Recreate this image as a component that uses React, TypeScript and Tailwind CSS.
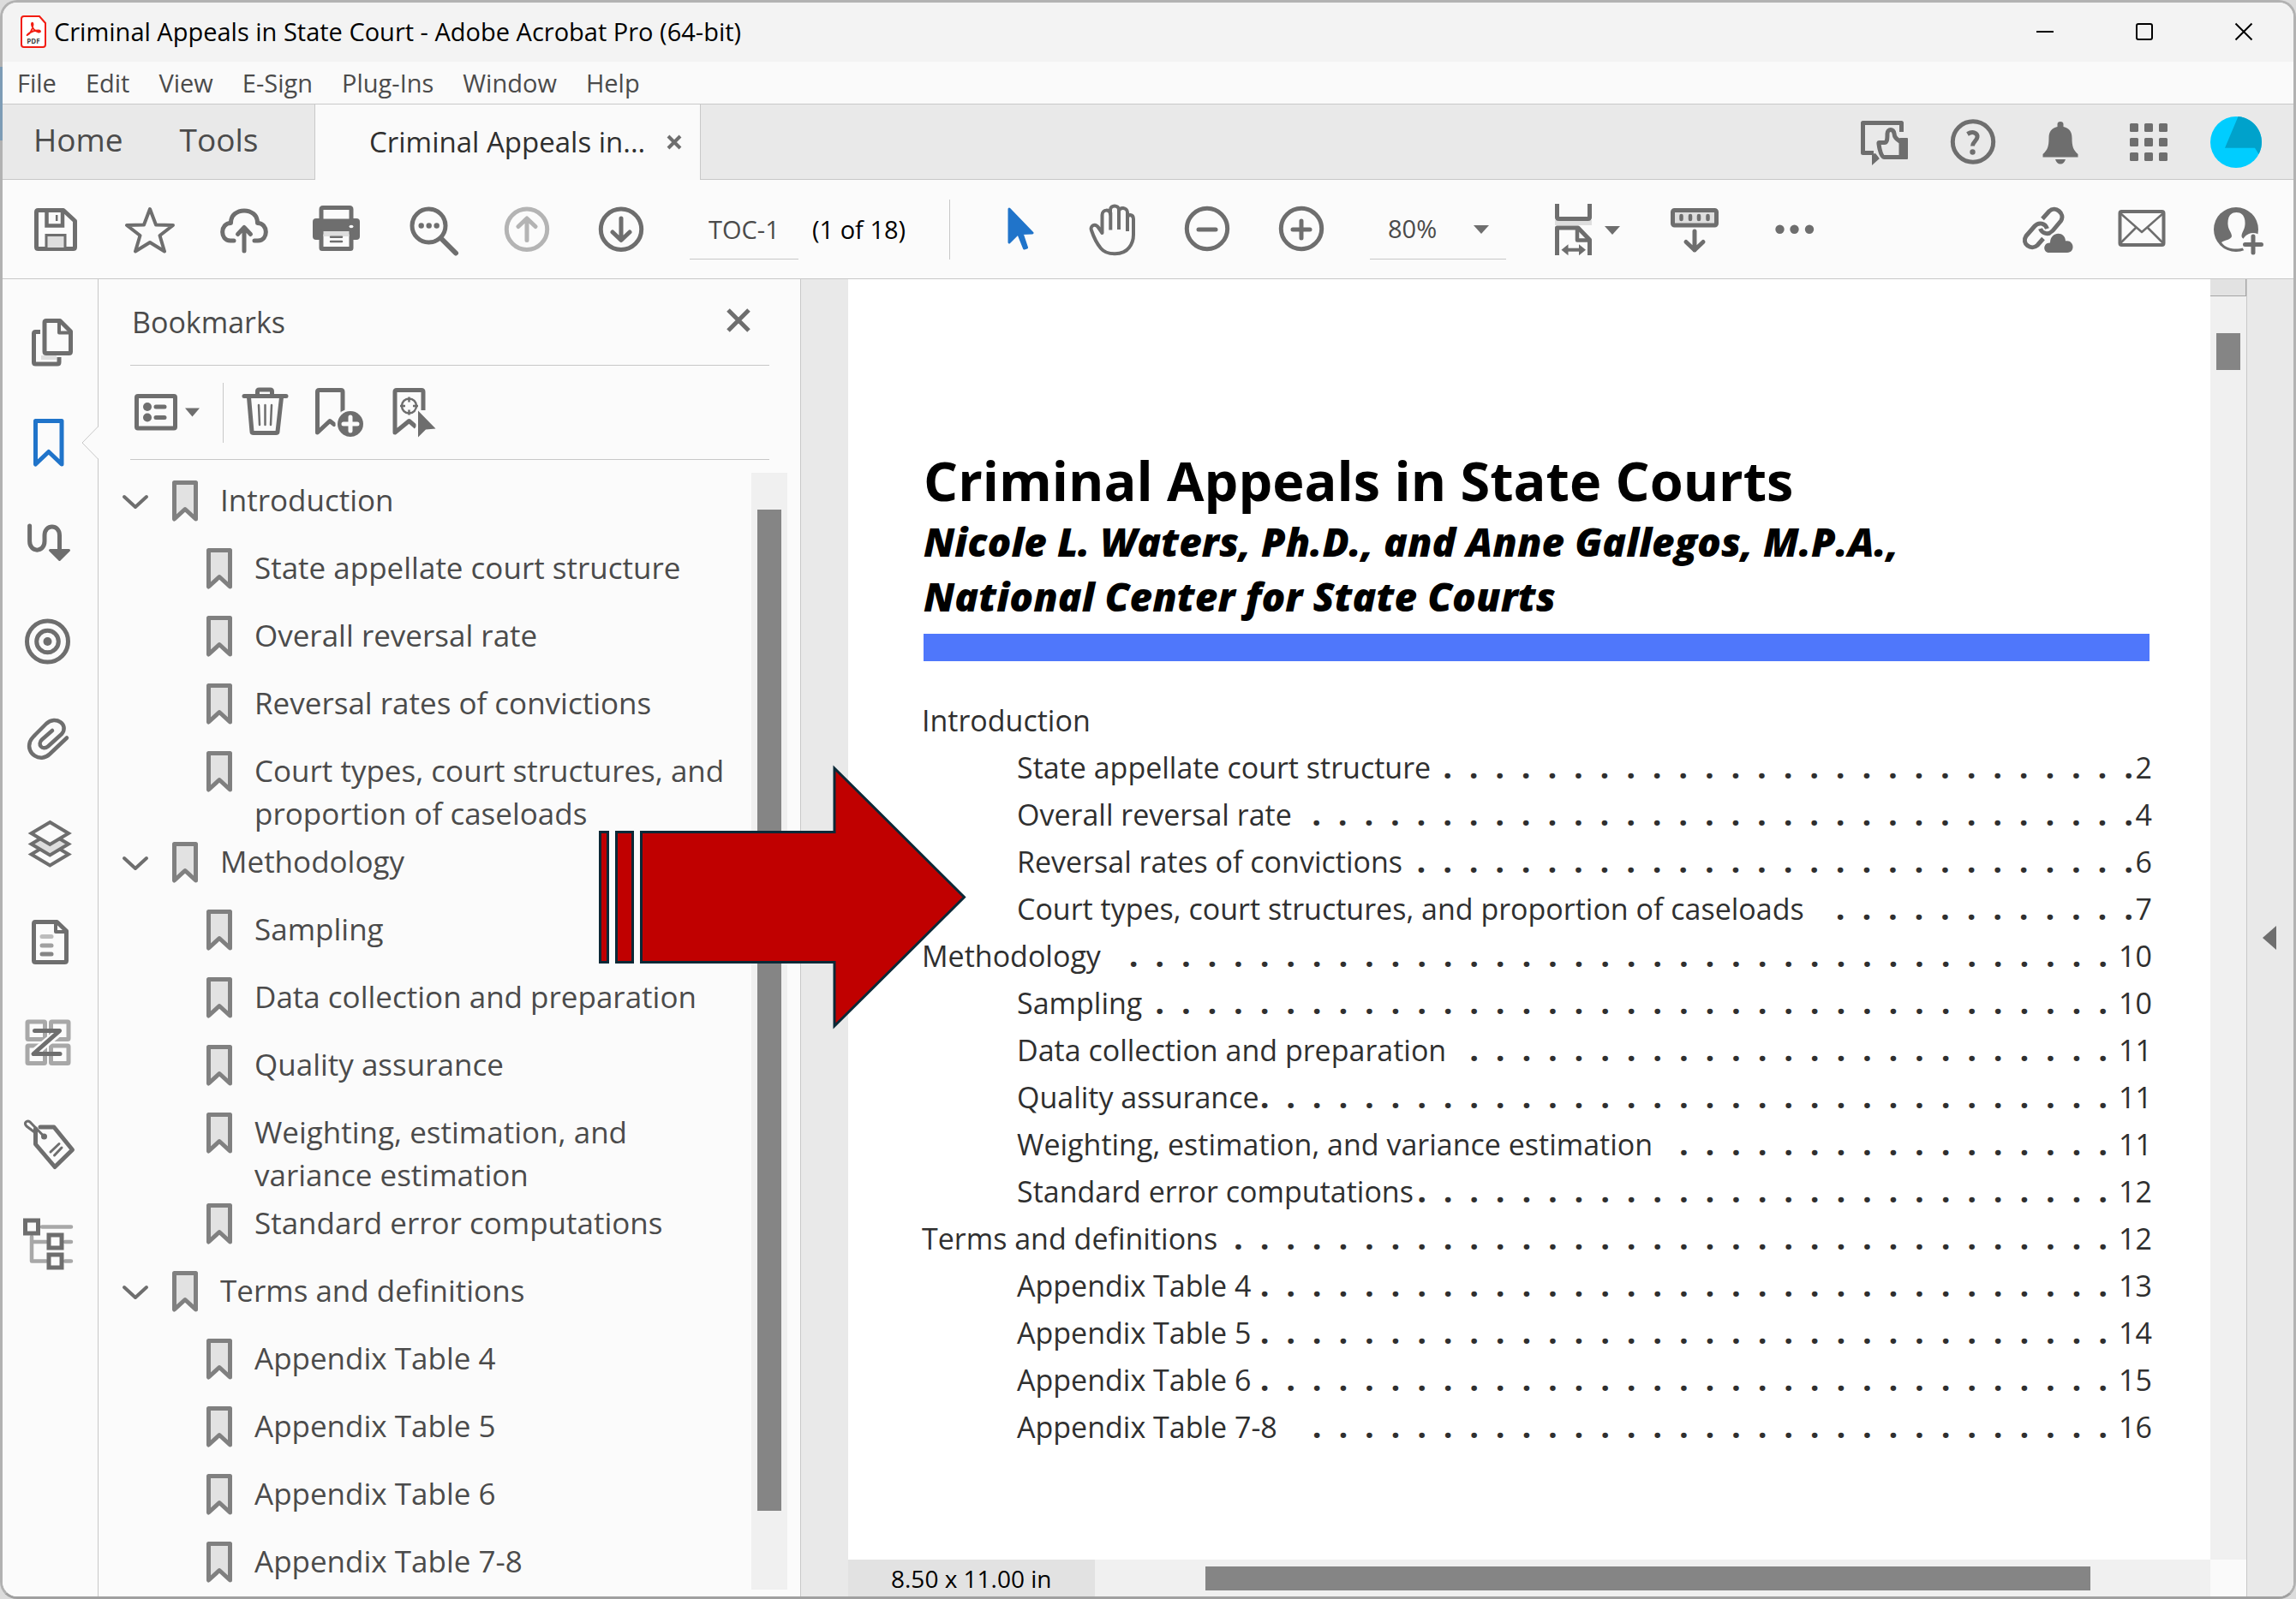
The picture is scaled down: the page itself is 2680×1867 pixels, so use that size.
import React from "react";

type IconProps = {
  w?: number;
  h?: number;
  stroke?: string;
  sw?: number;
  className?: string;
  children: React.ReactNode;
};

const GRAY = "#6e6e6e";
const LIGHT = "#dedede";

function Icon({ w = 60, h = 60, stroke = GRAY, sw = 5, className = "", children }: IconProps) {
  return (
    <svg
      width={w}
      height={h}
      viewBox={`0 0 ${w} ${h}`}
      fill="none"
      stroke={stroke}
      strokeWidth={sw}
      strokeLinecap="round"
      strokeLinejoin="round"
      aria-hidden="true"
      className={`shrink-0 overflow-visible ${className}`}
    >
      {children}
    </svg>
  );
}

function IconButton({ label, children, disabled }: { label: string; children: React.ReactNode; disabled?: boolean }) {
  return (
    <button type="button" aria-label={label} disabled={disabled} className="flex shrink-0 items-center">
      {children}
    </button>
  );
}

/* ---------- title bar, menu, tabs ---------- */

function AppLogo() {
  return (
    <svg width="30" height="38" viewBox="0 0 30 38" fill="none" aria-hidden="true" className="shrink-0">
      <path d="M4 1h18l7 8v25a3 3 0 0 1-3 3H4a3 3 0 0 1-3-3V4a3 3 0 0 1 3-3Z" fill="#fff" stroke="#f21d12" strokeWidth="2" />
      <path
        d="M8 23c3-1 6-7 6.500-12 .3-3-2-3-1.500 0 .6 4 4 8 8 8.500 3 .3 2.500-2 0-2-4 0-9 1.500-12 4-1.500 1.300-1.800 2-1 1.500Z"
        stroke="#f21d12"
        strokeWidth="1.800"
      />
      <text x="15" y="33" textAnchor="middle" fontSize="8" fontWeight="700" fill="#444" fontFamily="Open Sans, sans-serif">
        PDF
      </text>
    </svg>
  );
}

function TitleBar() {
  return (
    <header className="flex h-[69px] shrink-0 items-center bg-[#f3f3f3] pb-px pl-[21px]">
      <AppLogo />
      <h1 className="pl-[9px] text-[29px] whitespace-nowrap text-black">Criminal Appeals in State Court - Adobe Acrobat Pro (64-bit)</h1>
      <div className="ml-auto flex h-full">
        <button type="button" aria-label="Minimize" className="flex w-[116px] items-center justify-center">
          <Icon w={20} h={20} stroke="#000" sw={2}>
            <path d="M0 10h20" strokeLinecap="butt" />
          </Icon>
        </button>
        <button type="button" aria-label="Maximize" className="flex w-[116px] items-center justify-center">
          <Icon w={20} h={20} stroke="#000" sw={2}>
            <rect x="1" y="1" width="18" height="18" rx="2" />
          </Icon>
        </button>
        <button type="button" aria-label="Close" className="flex w-[116px] items-center justify-center">
          <Icon w={20} h={20} stroke="#000" sw={2}>
            <path d="M0.500 0.500 19.500 19.500M19.500 0.500 0.500 19.500" strokeLinecap="butt" />
          </Icon>
        </button>
      </div>
    </header>
  );
}

const MENUS = ["File", "Edit", "View", "E-Sign", "Plug-Ins", "Window", "Help"];

function MenuBar() {
  return (
    <nav aria-label="Menu" className="flex h-[50px] shrink-0 items-center gap-[34px] border-b border-[#c8c8c8] bg-[#fafafa] pl-[17px] text-[29px] text-[#4b4b4b]">
      {MENUS.map((m) => (
        <button type="button" key={m}>
          {m}
        </button>
      ))}
    </nav>
  );
}

function TabBar() {
  return (
    <div className="flex h-[88px] shrink-0 bg-[#e9e9e9]">
      <div className="flex w-[365px] items-center gap-[66px] border-r border-b border-[#c8c8c8] pb-1.5 pl-9 text-[37px] text-[#4b4b4b]">
        <button type="button">Home</button>
        <button type="button">Tools</button>
      </div>
      <div className="flex w-[449px] items-center bg-[#fafafa] pl-[63px] text-[33px] text-[#2f2f2f]">
        <span className="whitespace-nowrap">Criminal Appeals in...</span>
        <button type="button" aria-label="Close tab" className="mr-[21px] ml-auto">
          <Icon w={18} h={18} sw={4}>
            <path d="M2 2 16 16M16 2 2 16" strokeLinecap="butt" />
          </Icon>
        </button>
      </div>
      <div className="flex flex-1 items-center justify-end gap-[42px] border-b border-l border-[#c8c8c8] pr-[37px]">
        <IconButton label="Feedback">
          <Icon>
            <path d="M47.500 18V7.500h-45v35H15" strokeLinecap="butt" />
            <path d="M13 44v13l9-8-5-6Z" fill={GRAY} stroke="none" />
            <path d="M21 30.500h6.500c3 0 3.500-3 3.500-10.500C31 14 38.500 14 39 20c.3 5 3 6.500 8 10v17.500H27c-4 0-6.500-17-6-17Z" fill="#e9e9e9" stroke="#e9e9e9" strokeWidth="9" />
            <path d="M21 30.500h6.500c3 0 3.500-3 3.500-10.500C31 14 38.500 14 39 20c.3 5 3 6.500 8 10v17.500H27c-4 0-6.500-17-6-17Z" fill="#e9e9e9" />
            <rect x="45" y="25" width="10" height="25" rx="1" fill={GRAY} stroke="none" />
          </Icon>
        </IconButton>
        <IconButton label="Help">
          <Icon>
            <circle cx="29" cy="29.500" r="23.700" />
            <path d="M22.500 20.500C29 16.500 34.500 19.500 34 24c-.4 4.500-5.500 5.500-5.500 10.500" strokeLinecap="butt" />
            <circle cx="28.500" cy="41.500" r="3.200" fill={GRAY} stroke="none" />
          </Icon>
        </IconButton>
        <IconButton label="Notifications">
          <Icon stroke="none">
            <path
              d="M29 6c2.200 0 3.500 1 3.500 3v3c7 1.500 10 6 10 13 0 10 1.500 14 7 19v3.500H8.500V44c5.500-5 7-9 7-19 0-7 3-11.500 10-13V9c0-2 1.300-3 3.500-3ZM23 50h12c-1 3.500-3 5.500-6 5.500S24 53.500 23 50Z"
              fill={GRAY}
            />
          </Icon>
        </IconButton>
        <IconButton label="Apps">
          <Icon stroke="none">
            {[8, 25, 42].map((y) =>
              [8, 25, 42].map((x) => <rect key={`${x}-${y}`} x={x} y={y} width="10" height="10" rx="1.500" fill={GRAY} />)
            )}
          </Icon>
        </IconButton>
        <IconButton label="Account">
          <Icon stroke="none">
            <circle cx="30" cy="30" r="30" fill="#00cdff" />
            <path d="M32.500 0.100A30 30 0 0 1 56.500 44L52 36.700H17Z" fill="#00a2cb" />
          </Icon>
        </IconButton>
      </div>
    </div>
  );
}

/* ---------- main toolbar ---------- */

function Toolbar() {
  return (
    <div role="toolbar" aria-label="Document tools" className="flex h-[116px] shrink-0 items-center border-b border-[#c8c8c8] bg-[#fbfbfb] pr-[37px] pl-8 text-[29px]">
      <div className="flex items-center gap-[50px]">
        <IconButton label="Save">
          <Icon>
            <path d="M9 7.500h30L52.500 20v30.500q0 2-2 2h-41q-2 0-2-2v-41q0-2 2-2Z" />
            <path d="M19.500 8v17.500h18.500V8" strokeWidth="4.500" strokeLinecap="butt" strokeLinejoin="miter" />
            <path d="M31.200 13v7" strokeWidth="2.500" strokeLinecap="butt" />
            <path d="M19 51V36.500h22V51" fill={LIGHT} strokeWidth="3" strokeLinecap="butt" strokeLinejoin="miter" />
          </Icon>
        </IconButton>
        <IconButton label="Star">
          <Icon sw={4}>
            <path d="M30 6 37 24.500 57 25 41.500 37 47 55.500 30 45 13 55.500 18.500 37 3 25 23 24.500Z" />
          </Icon>
        </IconButton>
        <IconButton label="Upload to cloud">
          <Icon>
            <path d="M18 43h-4C1 43 2 22 14.500 22.500 14 3 46 3 45.500 22.500 58 22 59 43 46 43h-4" />
            <path d="M30 55V28M22.500 35.500 30 27.500l7.500 8" />
          </Icon>
        </IconButton>
        <IconButton label="Print">
          <Icon>
            <rect x="0" y="17" width="55" height="25" rx="4" fill={GRAY} stroke="none" />
            <path d="M10 20V6.500q0-2 2-2h31q2 0 2 2V20Z" fill="#fbfbfb" />
            <rect x="3" y="20" width="49" height="12" fill={GRAY} stroke="none" />
            <rect x="10" y="33" width="35" height="19.500" rx="1" fill="#fbfbfb" />
            <rect x="12.500" y="32" width="30" height="6" fill={LIGHT} stroke="none" />
            <path d="M21 38.700h13M21 44h13" strokeWidth="2.500" />
            <ellipse cx="45" cy="26.500" rx="2.500" ry="1.800" fill="#fbfbfb" stroke="none" />
          </Icon>
        </IconButton>
        <IconButton label="Find">
          <Icon>
            <circle cx="25.500" cy="25.500" r="19.500" />
            <path d="M40.500 41 57 57.500" strokeWidth="6" />
            <g fill={GRAY} stroke="none">
              <circle cx="16.700" cy="25.500" r="3.200" />
              <circle cx="25.700" cy="25.500" r="3.200" />
              <circle cx="34.700" cy="25.500" r="3.200" />
            </g>
          </Icon>
        </IconButton>
        <IconButton label="Previous page" disabled>
          <Icon stroke="#b4b4b4">
            <circle cx="30" cy="29.700" r="23.700" />
            <path d="M30 42.500V17.500M20 26.500 30 17l10 9.500" />
          </Icon>
        </IconButton>
        <IconButton label="Next page">
          <Icon>
            <circle cx="30" cy="29.700" r="23.700" />
            <path d="M30 17v25M20 33 30 42.500 40 33" />
          </Icon>
        </IconButton>
        <input
          aria-label="Page"
          defaultValue="TOC-1"
          className="h-[70px] w-[127px] border-b border-[#c8c8c8] bg-transparent pl-[22px] text-[#4b4b4b] outline-none"
        />
      </div>
      <span className="ml-4 w-40 whitespace-nowrap text-black">(1 of 18)</span>
      <div className="h-[70px] border-l border-[#c8c8c8]" />
      <div className="ml-[50px] flex items-center gap-[50px]">
        <IconButton label="Select">
          <Icon stroke="#2074ca" sw={3}>
            <path d="M19 6 46 34 34 34.500 39.500 51 36.500 52 29.500 34.500 19 45Z" fill="#2074ca" />
          </Icon>
        </IconButton>
        <IconButton label="Hand">
          <Icon sw={4}>
            <path d="M17.500 34 13 27.500C9 22 3 26 5 31c3 9 6 15 11 21 7 8.500 26 8.500 33-1 4-5 5-10 5-15V18c0-6-7-7-7-1v-7c0-6-10-7-10-1V7c0-6-10-6-10 0v5c0-6-9.500-6-9.500 1Z" />
            <path d="M27.300 10v20.500M37 8v22M47 15v17" strokeLinecap="butt" />
          </Icon>
        </IconButton>
        <IconButton label="Zoom out">
          <Icon>
            <circle cx="30" cy="29" r="23.700" />
            <path d="M20 30h20" />
          </Icon>
        </IconButton>
        <IconButton label="Zoom in">
          <Icon>
            <circle cx="30" cy="29" r="23.700" />
            <path d="M20 30h20M30 20v20" />
          </Icon>
        </IconButton>
        <div className="relative">
          <select
            aria-label="Zoom level"
            defaultValue="80%"
            className="h-[70px] w-[159px] appearance-none border-b border-[#c8c8c8] bg-transparent pl-[21px] text-[#4b4b4b] outline-none"
          >
            <option>80%</option>
            <option>100%</option>
          </select>
          <svg width="18" height="10" viewBox="0 0 18 10" aria-hidden="true" className="pointer-events-none absolute top-[30px] right-5">
            <path d="M0 0h18L9 10Z" fill={GRAY} />
          </svg>
        </div>
      </div>
      <div className="ml-[50px] flex items-center gap-[56px]">
        <IconButton label="Page fit">
          <Icon w={84}>
            <rect x="7" y="19" width="43" height="6" fill={LIGHT} stroke="none" />
            <g strokeLinecap="butt">
              <path d="M9.500 0v15.500q0 2 2 2h34q2 0 2-2V0" />
              <path d="M9.500 60V28h24.500L47.500 42v18" />
              <path d="M33 28v14.500h14" strokeWidth="4.500" />
              <path d="M19 53.700h20" strokeWidth="4" />
            </g>
            <path d="M14.500 53.700l8-6.500v13ZM43 53.700l-8-6.500v13Z" fill={GRAY} stroke="none" />
            <path d="M65 26h18l-9 10Z" fill={GRAY} stroke="none" />
          </Icon>
        </IconButton>
        <IconButton label="Keyboard">
          <Icon>
            <rect x="4.500" y="7.500" width="51" height="17.500" rx="2" fill={LIGHT} />
            <path d="M14.500 14v4M25 14v4M35 14v4M45.500 14v4" strokeWidth="4.500" />
            <path d="M30 32v22M20 44.500 30 54l10-9.500" />
          </Icon>
        </IconButton>
        <IconButton label="More tools">
          <Icon stroke="none">
            <circle cx="13.500" cy="29.700" r="5.200" fill={GRAY} />
            <circle cx="30.500" cy="29.700" r="5.200" fill={GRAY} />
            <circle cx="48" cy="29.700" r="5.200" fill={GRAY} />
          </Icon>
        </IconButton>
      </div>
      <div className="ml-auto flex items-center gap-[50px]">
        <IconButton label="Share link">
          <Icon>
            <g strokeLinecap="butt">
              <path d="M24 17.500 32 8.500C39 2 51 11 45.500 20L35.500 32C31 37 23.500 34.500 21.500 29" />
              <path d="M25 40.500 18 48.500C11 55 -1 46.500 5 37.500L15 26c5-5.500 12.500-3 14.500 3" />
            </g>
            <path d="M32 57c-8 0-7.500-12 1-11.500 0-14 18-14 18-2 10-2 12 13.500 2 13.500Z" fill={GRAY} stroke="#fbfbfb" strokeWidth="5" paintOrder="stroke" />
          </Icon>
        </IconButton>
        <IconButton label="Email">
          <Icon sw={4}>
            <rect x="4.500" y="9" width="51" height="39" rx="2" />
            <path d="M5 11 30 33 55 11M5 46l18-18M55 46 37 28" strokeWidth="2.500" />
          </Icon>
        </IconButton>
        <IconButton label="Share with people">
          <Icon stroke="none">
            <circle cx="30" cy="30" r="26" fill={GRAY} />
            <path
              d="M30.500 10C23 10 20 16 20.500 24c.5 7 4.500 9 4.500 14-1 4-8 4-12 7 4 6 11 7.500 17 7.500S43 51 48 45c-4-3-11-3-11.500-7 0-5 3.500-7 4-14 .5-8-2.500-14-10-14Z"
              fill="#fbfbfb"
            />
            <circle cx="50" cy="47" r="13" fill="#fbfbfb" />
            <path d="M50 38v19M40.500 47.500h19" stroke={GRAY} strokeWidth="5" />
          </Icon>
        </IconButton>
      </div>
    </div>
  );
}

/* ---------- left rail ---------- */

const RAIL: { label: string; active?: boolean; icon: React.ReactNode }[] = [
  {
    label: "Page thumbnails",
    icon: (
      <Icon>
        <path d="M19 17.500h-5.500q-2 0-2 2V53q0 2 2 2H39q2 0 2-2v-6" strokeLinecap="butt" />
        <path d="M20 47.500h18" stroke={LIGHT} strokeLinecap="butt" />
        <path d="M26 4.500h16L54.500 17v23.500q0 2-2 2H26q-2 0-2-2v-34q0-2 2-2Z" />
        <path d="M41 5v13.500h13" strokeWidth="4" />
      </Icon>
    ),
  },
  {
    label: "Bookmarks",
    active: true,
    icon: (
      <Icon stroke="#2074ca">
        <path d="M13.500 4.500H44V55L28.800 40.500 13.500 55Z" />
      </Icon>
    ),
  },
  {
    label: "Order",
    icon: (
      <Icon>
        <path d="M6.600 10v18c0 13.500 17.400 13.500 17.400 0v-7c0-13.500 17.500-13.500 17.500 0v18" />
        <path d="M30.500 38.500h22L41.500 49.500Z" fill={GRAY} strokeWidth="3" />
      </Icon>
    ),
  },
  {
    label: "Destinations",
    icon: (
      <Icon>
        <circle cx="27.500" cy="28" r="24" />
        <circle cx="27.500" cy="28" r="12.800" />
        <circle cx="27.500" cy="28" r="5" fill={GRAY} stroke="none" />
      </Icon>
    ),
  },
  {
    label: "Attachments",
    icon: (
      <Icon sw={4.5}>
        <path d="M50 23.500 30 42.500C19 53 2 42 7 28c1.200-3.500 3.500-5 6-8L26 7C37-3 53 8 44 19L28 33.500C21.500 39 15 31 21 25.500L33 15" />
      </Icon>
    ),
  },
  {
    label: "Layers",
    icon: (
      <Icon sw={4}>
        <g strokeLinejoin="miter">
          <path d="M30.300 29.500 52 42.500 30.300 55.500 8.500 42.500Z" fill="#fbfbfb" />
          <path d="M30.300 17.500 52 30.500 30.300 43.500 8.500 30.500Z" fill={LIGHT} />
          <path d="M30.300 5 52 18 30.300 31 8.500 18Z" fill="#fbfbfb" />
        </g>
      </Icon>
    ),
  },
  {
    label: "Articles",
    icon: (
      <Icon>
        <path d="M13 4.500h25.500L49.500 15v34.500q0 2-2 2H13.500q-2 0-2-2v-43q0-2 1.500-2Z" />
        <path d="M37 5v11h12" strokeWidth="4" />
        <path d="M21 21.500h11" stroke="#bdbdbd" />
        <path d="M21 32h11" stroke="#a0a0a0" />
        <path d="M21 42h11" stroke="#858585" />
      </Icon>
    ),
  },
  {
    label: "Reading order",
    icon: (
      <Icon>
        <g stroke="#a8a8a8">
          <rect x="4" y="4" width="20.500" height="20.500" rx="1" />
          <rect x="31.500" y="4" width="20.500" height="20.500" rx="1" />
          <rect x="4" y="32" width="20.500" height="20.500" rx="1" />
          <rect x="31.500" y="32" width="20.500" height="20.500" rx="1" />
        </g>
        <path d="M41 16 11 41" stroke="#fbfbfb" strokeWidth="10" strokeLinecap="butt" />
        <path d="M12.500 14.600h29L11 41.500h31" strokeWidth="5" />
      </Icon>
    ),
  },
  {
    label: "Tags",
    icon: (
      <Icon>
        <path d="M19 10h16L56.500 36.500 36 56.500 13.500 30V12" />
        <path d="M13 16.500 3 9C-1 5 3.500 1.500 7 4l16 16.500" strokeWidth="3" />
        <circle cx="23.500" cy="21" r="3.500" fill={GRAY} stroke="none" />
        <path d="M31 39 41 29.500M35.500 43 44 34" strokeWidth="3" />
      </Icon>
    ),
  },
  {
    label: "Content",
    icon: (
      <Icon>
        <path d="M21 9.500h34M9 21v28.500h17M9 27h17M48 27h7M48 49.500h7" stroke="#a8a8a8" strokeWidth="4.500" />
        <g strokeLinejoin="miter">
          <rect x="1.500" y="2" width="15" height="15" />
          <rect x="29" y="19" width="15" height="15" />
          <rect x="29" y="42" width="15" height="15" />
        </g>
      </Icon>
    ),
  },
];

function Rail() {
  return (
    <nav aria-label="Panels" className="flex w-28 shrink-0 flex-col border-r border-[#c8c8c8] bg-[#fbfbfb] pt-[15px]">
      {RAIL.map((r) => (
        <button type="button" key={r.label} aria-label={r.label} aria-pressed={!!r.active} className="relative flex h-[117px] w-full shrink-0 items-center pl-[25px]">
          {r.icon}
          {r.active && (
            <svg width="20" height="38" viewBox="0 0 20 38" aria-hidden="true" className="absolute top-10 -right-px">
              <path d="M20 0 1 19 20 38Z" fill="#fbfbfb" />
              <path d="M19.500 0 1 19 19.500 38" fill="none" stroke="#c8c8c8" />
            </svg>
          )}
        </button>
      ))}
    </nav>
  );
}

/* ---------- bookmarks panel ---------- */

type Bookmark = { title: string; children: string[] };

const BOOKMARKS: Bookmark[] = [
  {
    title: "Introduction",
    children: [
      "State appellate court structure",
      "Overall reversal rate",
      "Reversal rates of convictions",
      "Court types, court structures, and proportion of caseloads",
    ],
  },
  {
    title: "Methodology",
    children: [
      "Sampling",
      "Data collection and preparation",
      "Quality assurance",
      "Weighting, estimation, and variance estimation",
      "Standard error computations",
    ],
  },
  {
    title: "Terms and definitions",
    children: ["Appendix Table 4", "Appendix Table 5", "Appendix Table 6", "Appendix Table 7-8"],
  },
];

function BookmarkGlyph() {
  return (
    <svg width="30" height="48" viewBox="0 0 30 48" aria-hidden="true" className="mt-0.5 shrink-0">
      <path d="M2.500 2.500h25v42.500L15 33.500 2.500 45Z" fill="#e2e2e2" stroke="#808080" strokeWidth="5" strokeLinejoin="round" />
    </svg>
  );
}

function BookmarkRow({ title }: { title: string }) {
  return (
    <a href="#" className="flex min-h-[79px] items-start gap-[26px] pb-1.5">
      <BookmarkGlyph />
      <span className="leading-[50px]">{title}</span>
    </a>
  );
}

function BookmarksPanel() {
  return (
    <aside aria-label="Bookmarks" className="flex w-[820px] shrink-0 flex-col border-r border-[#c8c8c8] bg-[#fbfbfb]">
      <div className="mr-9 ml-[37px]">
        <div className="flex h-[101px] items-center justify-between border-b border-[#c8c8c8]">
          <h2 className="pl-0.5 text-[34px] text-[#4b4b4b]">Bookmarks</h2>
          <button type="button" aria-label="Close panel" className="mr-[22px] pb-1">
            <Icon w={28} h={28}>
              <path d="M2 2 26 26M26 2 2 26" strokeLinecap="butt" />
            </Icon>
          </button>
        </div>
        <div className="flex h-[110px] items-center border-b border-[#c8c8c8]">
          <IconButton label="Options">
            <Icon w={84}>
              <rect x="7.500" y="10.500" width="45" height="37.500" rx="1.500" />
              <circle cx="20" cy="23" r="5" fill={GRAY} stroke="none" />
              <circle cx="20" cy="35.500" r="5" fill={GRAY} stroke="none" />
              <path d="M30 23h10M30 35.500h10" />
              <path d="M64 24.500h17l-8.500 10Z" fill={GRAY} stroke="none" />
            </Icon>
          </IconButton>
          <div className="ml-6 h-[70px] border-l border-[#c8c8c8]" />
          <div className="ml-[19px] flex gap-[26px]">
            <IconButton label="Delete bookmark">
              <Icon>
                <path d="M5 10.500h49M20.500 10V5q0-2 2-2h13q2 0 2 2v5" />
                <path d="M10.500 12 14 52q0 1.500 2 1.500h26q2 0 2-1.500L48.500 12" />
                <path d="M22 21l1 23M29.500 21v23M37 21l-1 23" strokeWidth="2.500" />
              </Icon>
            </IconButton>
            <IconButton label="New bookmark">
              <Icon>
                <path d="M34 28V5.500q0-2-2-2H6.500q-2 0-2 2V53L19 39.500l5 4" />
                <circle cx="43" cy="43" r="17.500" fill="#fbfbfb" stroke="none" />
                <circle cx="43" cy="43" r="15" fill={GRAY} stroke="none" />
                <path d="M43 35v16M35 43h16" stroke="#fbfbfb" />
              </Icon>
            </IconButton>
            <IconButton label="Expand current bookmark">
              <Icon>
                <path d="M42 27V5.500q0-2-2-2H11q-2 0-2 2V53l16.500-13.500 8 7" strokeLinecap="butt" />
                <circle cx="25.500" cy="22" r="8.500" strokeWidth="2.500" />
                <path d="M25.500 11.500v6M25.500 26.500v6M15 22h6M30 22h6" strokeWidth="2.500" strokeLinecap="butt" />
                <path d="M36 27.500 56.500 48.500 45 49.500 36 58.500Z" fill={GRAY} stroke="#fbfbfb" strokeWidth="5" paintOrder="stroke" />
              </Icon>
            </IconButton>
          </div>
        </div>
      </div>
      <div className="flex min-h-0 flex-1 pt-[15px] pr-[15px] pb-2">
        <ul className="min-w-0 flex-1 pt-[7px] pr-2 pl-7 text-[35px] text-[#4b4b4b]">
          {BOOKMARKS.map((b) => (
            <li key={b.title} className="flex items-start gap-7">
              <button type="button" aria-label={`Collapse ${b.title}`} className="mt-[19px]">
                <Icon w={30} h={17} sw={4}>
                  <path d="M2 2 15 14 28 2" />
                </Icon>
              </button>
              <div className="min-w-0 flex-1">
                <BookmarkRow title={b.title} />
                <ul className="pl-10">
                  {b.children.map((c) => (
                    <li key={c}>
                      <BookmarkRow title={c} />
                    </li>
                  ))}
                </ul>
              </div>
            </li>
          ))}
        </ul>
        <div className="flex w-[42px] shrink-0 flex-col bg-[#f0f0f0] px-[7px] pt-[43px] pb-[92px]">
          <div className="flex-1 bg-[#858585]" />
        </div>
      </div>
    </aside>
  );
}

/* ---------- document ---------- */

type TocLine = { text: string; page?: string; dots?: number; top?: boolean };

const TOC: TocLine[] = [
  { text: "Introduction", top: true },
  { text: "State appellate court structure", page: "2", dots: 27 },
  { text: "Overall reversal rate", page: "4", dots: 32 },
  { text: "Reversal rates of convictions", page: "6", dots: 28 },
  { text: "Court types, court structures, and proportion of caseloads", page: "7", dots: 12 },
  { text: "Methodology", page: "10", dots: 38, top: true },
  { text: "Sampling", page: "10", dots: 37 },
  { text: "Data collection and preparation", page: "11", dots: 25 },
  { text: "Quality assurance", page: "11", dots: 33 },
  { text: "Weighting, estimation, and variance estimation", page: "11", dots: 17 },
  { text: "Standard error computations", page: "12", dots: 27 },
  { text: "Terms and definitions", page: "12", dots: 34, top: true },
  { text: "Appendix Table 4", page: "13", dots: 33 },
  { text: "Appendix Table 5", page: "14", dots: 33 },
  { text: "Appendix Table 6", page: "15", dots: 33 },
  { text: "Appendix Table 7-8", page: "16", dots: 31 },
];

function TocRow({ line }: { line: TocLine }) {
  const leader = line.dots ? Array(line.dots).fill(".").join("  ") : " ";
  return (
    <li>
      <a href="#" className={`flex h-[55px] items-baseline whitespace-pre ${line.top ? "" : "pl-[111px]"}`}>
        <span>{line.text}</span>
        <span className="flex w-0 flex-1 justify-end text-[38px] font-bold" aria-hidden="true">
          <span>{leader}</span>
        </span>
        {line.page && <span className={`text-right ${line.page.length > 1 ? "w-[52px]" : "w-[22px]"}`}>{line.page}</span>}
      </a>
    </li>
  );
}

function DocumentView() {
  return (
    <main className="flex min-w-0 flex-1 flex-col bg-[#e9e9e9] pl-[55px]">
      <div className="flex min-h-0 flex-1">
        <article className="min-w-0 flex-1 bg-white pt-[196px] pr-[71px] pl-[88px]">
          <h2 className="text-[63px] leading-[78px] font-bold whitespace-nowrap text-black">Criminal Appeals in State Courts</h2>
          <p className="text-[46px] leading-[64px] font-extrabold whitespace-nowrap text-black italic">
            Nicole L. Waters, Ph.D., and Anne Gallegos, M.P.A.,
            <br />
            National Center for State Courts
          </p>
          <div className="mt-3 h-8 bg-[#4f77fb]" />
          <ul className="-mr-[3px] -ml-0.5 pt-[40px] text-[34px] leading-[55px] text-[#2f2f2f]">
            {TOC.map((line) => (
              <TocRow key={line.text} line={line} />
            ))}
          </ul>
        </article>
        <div className="flex w-[42px] shrink-0 flex-col items-center bg-[#f0f0f0]">
          <div className="h-5 w-full border-r border-b border-[#a5a5a5] bg-[#e2e2e2]" />
          <div className="mt-[43px] h-[43px] w-7 bg-[#858585]" />
        </div>
      </div>
      <div className="flex h-[43px] shrink-0">
        <div className="flex w-72 items-center bg-[#e2e2e2] pl-[50px] text-[28px] whitespace-nowrap text-black">8.50 x 11.00 in</div>
        <div className="flex flex-1 items-center bg-[#f0f0f0] pr-[140px] pl-[129px]">
          <div className="h-7 flex-1 bg-[#858585]" />
        </div>
        <div className="w-[42px] bg-[#fafafa]" />
      </div>
    </main>
  );
}

function ToolsPane() {
  return (
    <div className="flex w-[55px] shrink-0 items-center justify-center border-l border-[#c8c8c8] bg-[#e9e9e9] pr-0.5">
      <button type="button" aria-label="Show tools pane">
        <svg width="16" height="28" viewBox="0 0 16 28" aria-hidden="true">
          <path d="M16 0v28L0 14Z" fill={GRAY} />
        </svg>
      </button>
    </div>
  );
}

function Callout() {
  return (
    <svg
      width="430"
      height="312"
      viewBox="0 0 430 312"
      fill="#c00000"
      stroke="#0b2937"
      strokeWidth="3"
      aria-hidden="true"
      className="pointer-events-none absolute top-[892px] left-[698px]"
    >
      <path d="M2.500 79.500h9v152h-9ZM21.500 79.500h19v152h-19ZM50.500 79.500H276V5L427.500 155.500 276 306V231.500H50.500Z" />
    </svg>
  );
}

export default function App() {
  return (
    <div className="relative h-screen w-full bg-[#dcdcdc] font-['Open_Sans',sans-serif]">
      <div className="flex h-full w-full flex-col overflow-hidden rounded-[20px] border-[3px] border-[#b2b2b2] border-b-[#a0a0a0] bg-[#fbfbfb]">
        <TitleBar />
        <MenuBar />
        <TabBar />
        <Toolbar />
        <div className="flex min-h-0 flex-1">
          <Rail />
          <BookmarksPanel />
          <DocumentView />
          <ToolsPane />
        </div>
      </div>
      <div className="absolute top-[78px] left-0 h-[86px] w-[3px] bg-[#7d9cb6]" />
      <Callout />
    </div>
  );
}
